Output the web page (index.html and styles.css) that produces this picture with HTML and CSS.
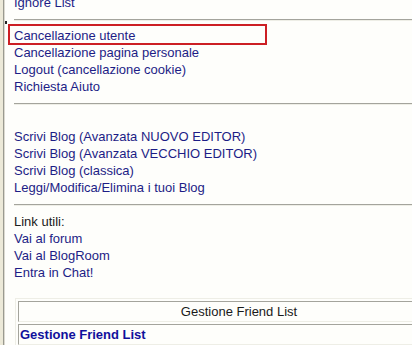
FILE: index.html
```html
<!DOCTYPE html>
<html lang="it">
<head>
    <meta charset="UTF-8">
    <title>Pannello utente</title>
    <link rel="stylesheet" href="styles.css">
</head>
<body>
    <div class="page">
        <div class="menu">
            <a href="#">Ignore List</a>
        </div>
        <hr>
        <div class="menu">
            <a href="#">Cancellazione utente</a>
            <a href="#">Cancellazione pagina personale</a>
            <a href="#">Logout (cancellazione cookie)</a>
            <a href="#">Richiesta Aiuto</a>
        </div>
        <hr>
        <div class="menu blog">
            <a href="#">Scrivi Blog (Avanzata NUOVO EDITOR)</a>
            <a href="#">Scrivi Blog (Avanzata VECCHIO EDITOR)</a>
            <a href="#">Scrivi Blog (classica)</a>
            <a href="#">Leggi/Modifica/Elimina i tuoi Blog</a>
        </div>
        <hr>
        <div class="menu links">
            <span>Link utili:</span>
            <a href="#">Vai al forum</a>
            <a href="#">Vai al BlogRoom</a>
            <a href="#">Entra in Chat!</a>
        </div>
        <table class="friends">
            <tr><td class="head">Gestione Friend List</td></tr>
            <tr><td class="title">Gestione Friend List</td></tr>
        </table>
        <span class="mark"></span>
        <div class="highlight"></div>
    </div>
</body>
</html>
```

FILE: styles.css
```css
html {
    background: #ece9d8;
    overflow: hidden;
}
body {
    margin: 0;
    padding: 0;
    font-family: "Liberation Sans", Arial, sans-serif;
    font-size: 13px;
    line-height: 17px;
    color: #1d1d86;
}
.page {
    position: relative;
    margin-left: 3px;
    margin-top: -6px;
    min-height: 360px;
    padding-left: 10px;
    background: #fefefb;
    border-left: 1px solid #9a9a90;
    box-shadow: inset 1px 0 0 #dcdad0;
}
.menu a, .menu span {
    display: block;
    color: #1d1d86;
    text-decoration: none;
}
.menu span {
    color: #202020;
}
hr {
    height: 0;
    margin: 7px 0 6px 0;
    border: none;
    border-top: 1px solid #a4a49c;
    border-bottom: 1px solid #eeeee6;
}
.menu + hr {
    margin-top: 8px;
}
.blog {
    margin-top: 23px;
}
.links {
    margin-top: 7px;
}
.friends {
    margin: 17px 0 0 1px;
    width: 448px;
    border-spacing: 2px;
    border: 1px solid;
    border-color: #eeeee6 #a4a49c #a4a49c #eeeee6;
}
.friends td {
    padding: 1px;
    border: 1px solid;
    border-color: #a4a49c #eeeee6 #eeeee6 #a4a49c;
}
.head {
    text-align: center;
    color: #1a1a1a;
}
.title {
    font-weight: bold;
    color: #10109c;
}
.mark {
    position: absolute;
    left: 1px;
    top: 27px;
    width: 2px;
    height: 3px;
    background: #222;
}
.highlight {
    position: absolute;
    left: 4px;
    top: 30px;
    width: 255px;
    height: 17px;
    border: 2px solid #cc1f24;
}
```
